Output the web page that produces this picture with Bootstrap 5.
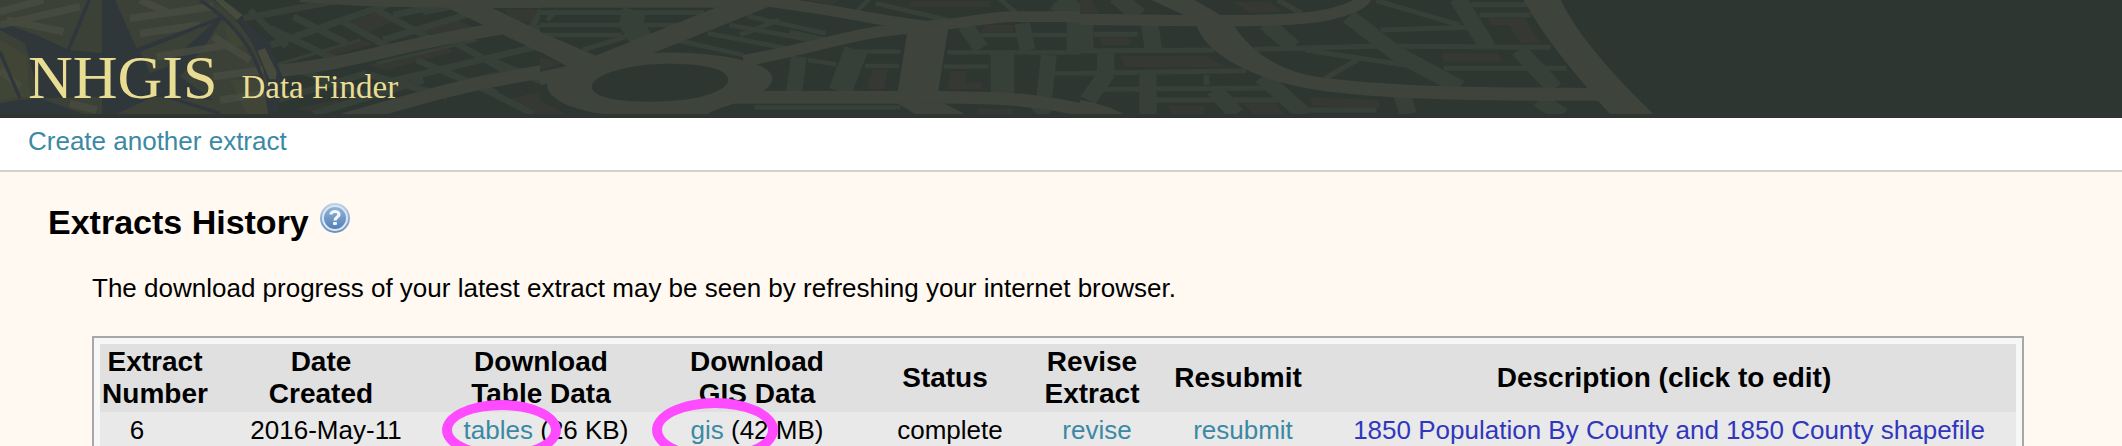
<!DOCTYPE html>
<html lang="en">
<head>
<meta charset="utf-8">
<meta name="viewport" content="width=device-width, initial-scale=1">
<title>NHGIS Data Finder</title>
<link href="https://cdn.jsdelivr.net/npm/bootstrap@5.3.0/dist/css/bootstrap.min.css" rel="stylesheet">
<style>
  body { background: #fff9f1; color: #000; font-family: "Liberation Sans", Arial, sans-serif; font-size: 26px; line-height: 32px; }
  a { color: #3b89a4; text-decoration: none; }
  a:hover { text-decoration: underline; }
  .site-head { height: 118px; background: #2e3632; border-bottom: 1px solid #302f34; }
  .site-map { left: 0; top: 0; width: 1654px; height: 114px; }
  .site-brand { color: #e9dd94; font-family: "Liberation Serif", "Times New Roman", serif; gap: 24px; padding: 42px 28px 0; }
  .site-brand:hover { text-decoration: none; }
  .brand-name { font-size: 62px; line-height: 70px; }
  .brand-sub { font-size: 33px; line-height: 36px; }
  .sub-bar { background: #fff; border-bottom: 2px solid #d4d0ca; padding: 7px 28px 13px; }
  .page-main { padding: 30px 98px 0 48px; }
  .page-title { font-size: 34px; line-height: 40px; }
  .help-btn { margin-left: 10px; }
  .help-btn svg { width: 32px; height: 32px; }
  .history { margin-left: 44px; }
  .history-note { padding: 30px 0 32px; }
  .table-frame { border: 2px solid #aaa7a9; background: #f7f7f7; padding: 6px; }
  .extracts { table-layout: fixed; border-collapse: collapse; }
  .extracts th { background: #e0e0e0; font-size: 28px; padding: 2px 0; white-space: nowrap; }
  .extracts td { background: #e9e9e9; padding: 2px 0 40px 10px; white-space: nowrap; }
  .extracts th:last-child, .extracts td:last-child { padding-right: 6px; }
  .extracts td.num { padding-left: 0; padding-right: 36px; }
  .extracts td.gis { padding-left: 0; }
  .desc-btn { color: #3137bd; }
  .c-num { width: 110px; } .c-date { width: 222px; } .c-tab { width: 218px; } .c-gis { width: 214px; }
  .c-stat { width: 162px; } .c-rev { width: 132px; } .c-sub { width: 160px; }
  .ring { border: 10px solid #ff4bff; border-radius: 50%; pointer-events: none; }
  .ring-tables { left: -22px; top: -15px; width: 119px; height: 60px; }
  .ring-gis { left: -39px; top: -17px; width: 126px; height: 64px; }
</style>
<script src="https://cdn.jsdelivr.net/npm/bootstrap@5.3.0/dist/js/bootstrap.bundle.min.js"></script>
</head>
<body class="vh-100 d-flex flex-column overflow-hidden">

<header class="site-head position-relative overflow-hidden flex-shrink-0">
  <svg class="site-map position-absolute" viewBox="0 0 1654 114" aria-hidden="true">
    <!-- streets, middle left -->
    <g transform="translate(250) scale(.33333)" fill="none" stroke="#374038">
      <rect width="870" height="342" fill="#2e3631" stroke="none"/>
      <g fill="#363833" stroke="none">
        <path d="M300 65 400 30 440 60 350 100ZM520 95 620 60 670 80 560 105ZM0 40 150 15 170 22 20 50ZM210 150 330 118 370 132 250 168ZM350 195 590 140 610 155 410 210ZM650 235 800 200 860 212 700 250ZM760 28h110l-10 40-70-5ZM140 325 260 300 310 318 200 342ZM770 300 900 265V342H840Z"/>
      </g>
      <g stroke-width="20">
        <path d="M-20 55 300 -5M20 150 480 -10M60 85 260 180M130 50 290 130M270 60 430 150M370 25 540 115M0 30 110 140M400 120 680 35M430 45 600 10M610 125 780 220M500 180 740 280M360 225 590 290M160 215 360 290M400 250 900 130M720 180 870 243M690 260 850 342M80 300 350 220M190 342 520 240M840 90 880 20M820 85H870"/>
      </g>
      <path d="M380 190 680 120M520 40 680 10M60 200 330 120" stroke-width="10"/>
      <g stroke="#3e443c">
        <path d="M60 215 C300 195 450 130 760 85" stroke-width="38"/>
        <path d="M280 360 C520 290 650 250 880 215" stroke-width="40"/>
        <path d="M150 -8 C350 8 500 10 880 10" stroke-width="28"/>
        <path d="M580 -15 L900 140" stroke-width="58"/>
      </g>
    </g>
    <!-- streets, centre -->
    <g transform="translate(540) scale(.35714 .33333)" fill="none">
      <path fill="#2e3631" d="M0 0H1568V342H0Z"/>
      <path fill="#363833" d="M0 170 60 190 0 212ZM0 300 70 342H0ZM740 0h100l-20 15ZM1040 4h220v18h-230ZM1245 75h80v22h-90ZM930 208h45l-12 60h-48ZM1148 212h45v35h45v20h-95ZM1225 325h100v17h-100Z"/>
      <g stroke="#374038">
        <path d="M0 38H460M0 75H400M0 105H230M120 150 240 110M580 48 800 100M560 105 670 60M530 75 760 120M380 120 570 165M470 100 690 145M940 10 1140 60M1280 -10 1340 45M700 95 800 120" stroke-width="14"/>
        <path d="M45 30 20 62M930 -10 890 30M1140 157H1568M880 155H1010M750 180 830 193M910 198H1005M1130 200H1255M1200 105H1480M1440 220H1568M600 322H1010" stroke-width="13"/>
        <path d="M265 30 255 70 290 130M885 150 840 275M1295 160V280M1508 60V160M1450 0 1500 45" stroke-width="66"/>
        <path d="M725 170 712 275M1190 75 1235 145M1350 70 1365 150M1425 165 1412 290M1560 250 1530 300M1390 342 1420 315" stroke-width="44"/>
      </g>
      <g stroke="#3e443c">
        <path d="M0 10H620" stroke-width="26"/>
        <path d="M150 200 640 -10" stroke-width="56"/>
        <path d="M600 0 C800 20 950 65 1080 78 C1200 70 1250 50 1330 50H1580" stroke-width="32"/>
        <path d="M570 182 C750 150 900 90 1040 85" stroke-width="34"/>
        <path d="M1088 75 1056 290" stroke-width="112"/>
        <path d="M540 292H1060C1300 290 1420 300 1560 342" stroke-width="38"/>
      </g>
      <path fill="#3e443c" d="M0 95 180 178 160 230 70 196 0 155ZM0 215 90 195V235L0 256Z"/>
      <path fill="#3e443c" d="M20 250 C30 190 180 160 340 158 C470 155 650 180 650 235 C650 290 520 310 470 342H180C80 330 15 290 20 250ZM1000 310H1130L1190 342H1050Z"/>
      <path fill="#2e3631" d="M145 258C155 215 270 190 370 191C470 192 530 210 527 243C515 285 410 306 300 305C200 303 145 290 145 258Z"/>
    </g>
    <!-- streets, right -->
    <g transform="translate(1080) scale(.39541 .33333)" fill="none">
      <rect width="1460" height="342" fill="#2e3631"/>
      <path fill="#363833" d="M0 0h30l20 40H0ZM390 5h90l30 30-80 5ZM100 168h220l50 33H115ZM50 112h75v24H55ZM915 160h140l15 25H920ZM1030 55h95l40 75h-50l-30-55h-45ZM580 292 755 300 760 325 590 318ZM225 318h90v24h-85ZM410 310h85l20 32h-75Z"/>
      <g stroke="#374038">
        <path d="M0 153 340 150M440 148 760 138 1190 142M760 90 980 82M35 103H145M0 220 420 212M60 268 480 264M190 300H520M580 330H750M920 205H1230M1010 45H1140M980 14H1130M570 150 850 200M750 2 960 75M620 235 700 180M500 0 560 40M320 225V255" stroke-width="15"/>
        <path d="M12 70V150M176 70 186 150M65 160V225L20 300M172 215V342M90 -10 150 45M470 70 540 140M680 50 800 160 960 262M955 -5 1030 140M460 230 570 345M1110 150 1200 265M1160 300 1220 345M815 285 830 342M340 270 395 342" stroke-width="44"/>
      </g>
      <path fill="none" stroke="#3e443c" stroke-width="34" d="M-1 58C350 64 560 68 640 40C690 25 715 10 722 -10"/>
      <path fill="#3e443c" d="M180 0H290L360 48 390 78C430 150 500 215 610 232C800 262 1000 262 1285 264L1315 302C1000 304 760 298 600 270C430 238 320 160 295 78L262 44Z"/>
      <path fill="#3e443c" d="M1122 0H1216C1260 110 1350 225 1450 342H1340L1310 302C1230 190 1170 105 1122 0ZM0 300C50 310 85 325 110 342H0Z"/>
    </g>
    <!-- compass rose -->
    <g transform="scale(.33333)">
      <path fill="#3c4137" d="M0 0H640C740 70 800 180 820 342H0Z"/>
      <path fill="#424735" d="M0 120 80 165 90 290 0 300ZM410 175 600 130 560 200 460 250ZM670 60 740 130 690 150ZM690 240 800 240 810 342H740Z" opacity=".7"/>
      <g fill="#2f373a">
        <path d="M306 0H345L412 150 600 85 668 52 620 130 540 230 640 300 460 290 350 342H306V165L215 160 50 100 0 68 120 110 205 150 306 160Z"/>
        <path d="M0 65 120 110 205 150 306 165V290L120 295 75 130 0 90ZM0 310 55 300 120 295 250 342H0Z"/>
        <path d="M640 0H668L730 60 810 130 850 240 830 342H812C810 230 770 140 720 70Z"/>
      </g>
      <path fill="#3c4137" d="M420 155 640 68 560 140 500 200 450 220Z"/>
      <g fill="none" stroke="#4a4e41" stroke-width="22" opacity=".75">
        <path d="M0 75 240 20M0 35 130 0M20 60 190 95M390 55 640 20M420 100 600 75M420 0 500 35M470 170 680 135M640 110 750 180M640 230 790 210M660 300 800 280M0 210 60 260M210 310 290 330"/>
      </g>
      <g fill="none" stroke="#2f363c" stroke-width="10">
        <path d="M268 0 205 150M0 155 60 295M410 150 668 52M600 0C730 85 790 190 810 342M500 290 660 340"/>
      </g>
      <path fill="#474b3e" d="M645 0H670L728 45 710 60ZM772 152 795 145 830 215 828 238H808Z"/>
    </g>
  </svg>
  <a class="site-brand position-relative d-inline-flex align-items-baseline" href="#">
    <span class="brand-name">NHGIS</span>
    <span class="brand-sub">Data Finder</span>
  </a>
</header>

<nav class="sub-bar flex-shrink-0">
  <a href="#">Create another extract</a>
</nav>

<main class="page-main flex-grow-1 overflow-hidden">
  <div class="d-flex align-items-start">
    <h1 class="page-title fw-bold m-0">Extracts History</h1>
    <button class="help-btn btn p-0 border-0 d-flex" type="button" aria-label="Help">
      <svg viewBox="0 0 32 32" aria-hidden="true">
        <defs><linearGradient id="helpFill" x1="0" y1="0" x2="0" y2="1"><stop offset="0" stop-color="#91b3d8"/><stop offset="1" stop-color="#5580b5"/></linearGradient>
        <linearGradient id="helpRim" x1="0" y1="0" x2="0" y2="1"><stop offset="0" stop-color="#bdd3ec"/><stop offset="1" stop-color="#668fbe"/></linearGradient></defs>
        <circle cx="16" cy="16" r="15" fill="url(#helpRim)"/>
        <circle cx="16" cy="16" r="13" fill="#d9e6f4"/>
        <circle cx="16" cy="16" r="11" fill="url(#helpFill)"/>
        <path d="M12 12.500C12 8.500 20 8.500 20 12.500C20 15 16 15 16 18.500" fill="none" stroke="#f3f7fc" stroke-width="3.200"/>
        <rect x="14" y="20" width="4" height="3" rx="1" fill="#f3f7fc"/>
      </svg>
    </button>
  </div>

  <section class="history">
    <p class="history-note m-0">The download progress of your latest extract may be seen by refreshing your internet browser.</p>
    <div class="table-frame">
      <table class="extracts w-100 text-center align-middle">
        <colgroup>
          <col class="c-num"><col class="c-date"><col class="c-tab"><col class="c-gis">
          <col class="c-stat"><col class="c-rev"><col class="c-sub"><col>
        </colgroup>
        <thead>
          <tr>
            <th scope="col">Extract<br>Number</th>
            <th scope="col">Date<br>Created</th>
            <th scope="col">Download<br>Table Data</th>
            <th scope="col">Download<br>GIS Data</th>
            <th scope="col">Status</th>
            <th scope="col">Revise<br>Extract</th>
            <th scope="col">Resubmit</th>
            <th scope="col">Description (click to edit)</th>
          </tr>
        </thead>
        <tbody>
          <tr>
            <td class="num">6</td>
            <td>2016-May-11</td>
            <td><span class="position-relative"><a href="#">tables</a> (26 KB)<span class="ring ring-tables position-absolute"></span></span></td>
            <td class="gis"><span class="position-relative"><a href="#">gis</a> (42 MB)<span class="ring ring-gis position-absolute"></span></span></td>
            <td>complete</td>
            <td><a href="#">revise</a></td>
            <td><a href="#">resubmit</a></td>
            <td><button class="desc-btn bg-transparent border-0 p-0" type="button">1850 Population By County and 1850 County shapefile</button></td>
          </tr>
        </tbody>
      </table>
    </div>
  </section>
</main>

</body>
</html>
